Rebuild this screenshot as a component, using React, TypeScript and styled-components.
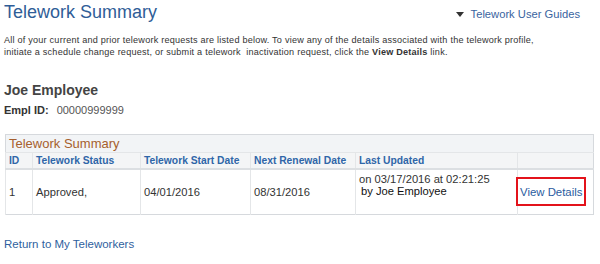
import styled, { createGlobalStyle } from 'styled-components'

const GlobalStyle = createGlobalStyle`
    body {
        margin: 0;
        background: #fff;
        font-family: "Liberation Sans", Arial, sans-serif;
        color: #333;
    }
`

const Page = styled.div`
    width: 600px;
    height: 264px;
    padding: 0 0 0 4px;
    box-sizing: border-box;
    overflow: hidden;
`

const TopBar = styled.div`
    display: flex;
    justify-content: space-between;
    align-items: flex-start;
    height: 35px;
`

const PageTitle = styled.h1`
    margin: 0;
    font-size: 18px;
    line-height: 24px;
    font-weight: normal;
    color: #2f5d97;
`

const Guides = styled.a`
    display: flex;
    align-items: center;
    gap: 7px;
    margin: 7px 20px 0 0;
    font-size: 11.2px;
    line-height: 14px;
    color: #3a64a0;
    text-decoration: none;
`

const Intro = styled.p`
    margin: 0;
    font-size: 9.1px;
    letter-spacing: 0.22px;
    line-height: 11.5px;
    color: #333;
    white-space: nowrap;

    b {
        color: #333;
    }
`

const Employee = styled.div`
    margin-top: 24px;
    font-size: 14px;
    line-height: 16px;
    font-weight: bold;
    color: #444;
`

const EmplRow = styled.div`
    margin-top: 5px;
    font-size: 11px;
    line-height: 14px;
    color: #555;

    b {
        color: #333;
        margin-right: 8px;
    }
`

const Grid = styled.table`
    margin: 17px 0 0 1px;
    width: 588px;
    border-collapse: collapse;
    border: 1px solid #d6d9dd;
    table-layout: fixed;
`

const Caption = styled.caption`
    text-align: left;
    border: 1px solid #d6d9dd;
    border-bottom: none;
    background: #f2f4f6;
    color: #a65f2d;
    font-size: 13px;
    line-height: 17px;
    padding: 0 0 0 3px;
`

const Head = styled.th`
    background: #f4f5f6;
    border-top: 1px solid #e4e6e8;
    border-left: 1px solid #e4e6e8;
    border-bottom: 2px solid #dcdfe2;
    color: #2f66a8;
    font-size: 10.3px;
    font-weight: bold;
    text-align: left;
    padding: 0 3px;
    height: 15px;
    line-height: 15px;
    white-space: nowrap;
    overflow: hidden;
`

const Cell = styled.td<{ $top?: boolean }>`
    border-left: 1px solid #e4e6e8;
    font-size: 11.2px;
    line-height: 12px;
    color: #333;
    padding: ${p => (p.$top ? '3px 3px 0' : '0 3px')};
    vertical-align: ${p => (p.$top ? 'top' : 'middle')};
    height: 45px;
    box-sizing: border-box;
    white-space: nowrap;
`

const ByLine = styled.span`
    display: block;
    color: #111;
    padding-left: 2px;
`

const DetailsLink = styled.a`
    display: inline-block;
    border: 2px solid #e3131b;
    padding: 6px 2px 5px 2px;
    margin-left: -5px;
    color: #2a5ba0;
    font-size: 11.4px;
    line-height: 14px;
    text-decoration: none;
`

const ReturnLink = styled.a`
    display: block;
    margin-top: 22px;
    font-size: 11.5px;
    line-height: 14px;
    color: #2f5f9e;
    text-decoration: none;
`

const Caret = () => (
    <svg width="8" height="5" viewBox="0 0 8 5">
        <path d="M0 0 L8 0 L4 5 Z" fill="#333" />
    </svg>
)

const columns = [
    { title: 'ID', width: 27 },
    { title: 'Telework Status', width: 108 },
    { title: 'Telework Start Date', width: 110 },
    { title: 'Next Renewal Date', width: 105 },
    { title: 'Last Updated', width: 162 },
    { title: '', width: 76 },
]

const App = () => {
    return (
        <Page>
            <GlobalStyle />
            <TopBar>
                <PageTitle>Telework Summary</PageTitle>
                <Guides href="#">
                    <Caret />
                    Telework User Guides
                </Guides>
            </TopBar>

            <Intro>
                All of your current and prior telework requests are listed below. To view any of the details associated with the telework profile,
                <br />
                initiate a schedule change request, or submit a telework&nbsp; inactivation request, click the <b>View Details</b> link.
            </Intro>

            <Employee>Joe Employee</Employee>
            <EmplRow>
                <b>Empl ID:</b>00000999999
            </EmplRow>

            <Grid>
                <Caption>Telework Summary</Caption>
                <colgroup>
                    {columns.map((c, i) => (
                        <col key={i} style={{ width: c.width }} />
                    ))}
                </colgroup>
                <thead>
                    <tr>
                        {columns.map((c, i) => (
                            <Head key={i}>{c.title}</Head>
                        ))}
                    </tr>
                </thead>
                <tbody>
                    <tr>
                        <Cell>1</Cell>
                        <Cell>Approved,</Cell>
                        <Cell>04/01/2016</Cell>
                        <Cell>08/31/2016</Cell>
                        <Cell $top>
                            on 03/17/2016 at 02:21:25
                            <ByLine>by Joe Employee</ByLine>
                        </Cell>
                        <Cell>
                            <DetailsLink href="#">View Details</DetailsLink>
                        </Cell>
                    </tr>
                </tbody>
            </Grid>

            <ReturnLink href="#">Return to My Teleworkers</ReturnLink>
        </Page>
    )
}

export default App
